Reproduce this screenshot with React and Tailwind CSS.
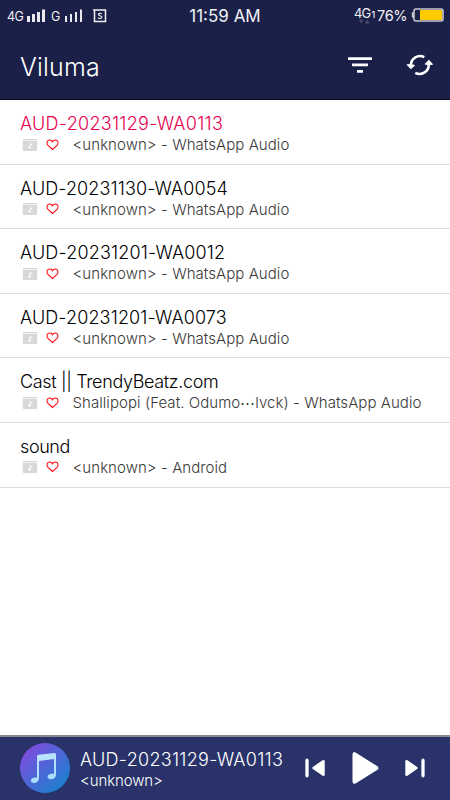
import React, { useState } from 'react';

const tracks = [
    { title: 'AUD-20231129-WA0113', info: '<unknown> - WhatsApp Audio', spacing: 'tracking-[0.29px]' },
    { title: 'AUD-20231130-WA0054', info: '<unknown> - WhatsApp Audio', spacing: 'tracking-[0.11px]' },
    { title: 'AUD-20231201-WA0012', info: '<unknown> - WhatsApp Audio', spacing: 'tracking-[0.17px]' },
    { title: 'AUD-20231201-WA0073', info: '<unknown> - WhatsApp Audio', spacing: 'tracking-[0.13px]' },
    { title: 'Cast || TrendyBeatz.com', info: 'Shallipopi (Feat. Odumo⋯lvck) - WhatsApp Audio', spacing: 'tracking-[-0.35px]' },
    { title: 'sound', info: '<unknown> - Android', spacing: 'tracking-[-0.4px]' },
];

function Signal({ wide }) {
    const w = wide ? 3 : 2;
    return (
        <svg width="18" height="14" viewBox="0 0 18 14" fill="#e8e8ee">
            <rect x="0" y="7" width={w} height="6" />
            <rect x="5" y="5" width={w} height="8" />
            <rect x="10" y="3" width={w} height="10" />
            <rect x="15" y="0.5" width={w} height="12.5" />
        </svg>
    );
}

function StatusBar() {
    return (
        <div className="grid h-8 grid-cols-3 text-[#f0f0f5]">
            <div className="flex items-start pt-[9px] pl-[7px]">
                <span className="mt-[1px] w-5 text-[12.5px] leading-[14px] tracking-[-0.5px]">4G</span>
                <Signal wide />
                <span className="mt-[1px] ml-[6px] w-[14px] text-[12.5px] leading-[14px]">G</span>
                <Signal />
                <svg className="ml-[10px]" width="14" height="14" viewBox="0 0 14 14" fill="none" stroke="currentColor">
                    <path d="M1.5 1V12.5H12.5V1H0" strokeWidth="1.5" />
                    <path d="M8.8 4.8C8 4 5.4 4 5.4 5.5S8.8 6.6 8.8 8.2S6 9.8 5.1 8.8" strokeWidth="1.2" />
                </svg>
            </div>
            <div className="pt-[6px] text-center text-[17px] leading-5">11:59 AM</div>
            <div className="flex items-start justify-end pt-[8px] pr-[6px]">
                <div className="mr-[1px] flex w-[22px] flex-col">
                    <div className="flex items-end leading-[11px]">
                        <span className="text-[13px] tracking-[-0.8px]">4G</span>
                        <span className="ml-[1px] text-[9px] leading-[9px] font-medium">1</span>
                    </div>
                    <svg className="ml-[5px]" width="11" height="5" viewBox="0 0 11 5" fill="#484c6c">
                        <path d="M0 0.5H4.5L2.2 4.5ZM6 4.5H10.5L8.2 0.5Z" />
                    </svg>
                </div>
                <span className="w-[34px] text-[14.5px] leading-4 tracking-[-0.3px]">76%</span>
                <svg width="33" height="14" viewBox="0 0 33 14">
                    <path d="M3.5 4.3H1.8Q.8 4.3.8 5.3V8.7Q.8 9.7 1.8 9.7H3.5Z" fill="#c8c8ce" />
                    <rect x="3" y="1" width="29" height="12" rx="2" fill="#1b2048" stroke="#c8c8ce" strokeWidth="1.6" />
                    <rect x="9" y="2" width="22" height="10" rx="0.7" fill="#fecb00" />
                </svg>
            </div>
        </div>
    );
}

function Header() {
    return (
        <header className="h-[100px] shrink-0 border-b border-[#080b24] bg-[#1b2048] text-white">
            <StatusBar />
            <div className="flex h-[68px] items-center justify-between pr-[16px] pl-5">
                <h1 className="pt-[2px] text-[25px] leading-8 font-light tracking-[0.2px]">Viluma</h1>
                <div className="flex items-center gap-[34px] pb-[2px]">
                    <button aria-label="Sort">
                        <svg width="24" height="18" viewBox="0 0 24 18" fill="currentColor">
                            <rect x="0" y="1.2" width="24" height="2.8" rx="0.5" />
                            <rect x="4" y="7.6" width="16" height="2.7" rx="0.5" />
                            <rect x="9" y="14" width="6" height="2.7" rx="0.5" />
                        </svg>
                    </button>
                    <button aria-label="Refresh">
                        <svg width="28" height="22" viewBox="0 0 28 22" fill="none" stroke="currentColor" strokeWidth="2.6">
                            <path d="M4.9 11A9 9 0 0 1 18.3 3.2" />
                            <path d="M22.7 11A9 9 0 0 1 9.3 18.8" />
                            <path d="M.3 10.6L4.9 9.8L9.2 11.2L4.9 15.3ZM27.3 10.6L22.7 11.6L18.4 10.2L22.9 5.7Z" fill="currentColor" stroke="none" />
                        </svg>
                    </button>
                </div>
            </div>
        </header>
    );
}

function TrackRow({ track, active, onSelect }) {
    return (
        <li
            onClick={onSelect}
            className="h-[64.6px] border-b border-[#dcdcdc] pt-[12px] pl-5"
        >
            <p className={`text-[18px] leading-[23px] font-light ${track.spacing} ${active ? 'text-[#e6004f]' : 'text-black'}`}>
                {track.title}
            </p>
            <div className="flex h-[19px] items-center">
                <svg className="ml-[2px]" width="16" height="14" viewBox="0 0 16 14">
                    <path d="M1 1H15V2.3H1Z" fill="#d4d4d4" />
                    <path d="M.8 3H15.2V12Q15.2 13 14.2 13H1.8Q.8 13 .8 12Z" fill="#d8d8d8" />
                    <path d="M8.3 5V9.4M8.3 5.2L10 7.2" stroke="#fff" strokeWidth="1" fill="none" />
                    <ellipse cx="7.4" cy="9.6" rx="1.4" ry="1.1" fill="#fff" />
                </svg>
                <svg className="ml-[8px]" width="13" height="12" viewBox="0 0 13 12" fill="none" stroke="#ff0810" strokeWidth="1.05">
                    <path d="M6.5 10.5L2 6.4C.2 4.6.8 1.3 3.4 1C5 .8 6 1.7 6.5 2.8C7 1.7 8 .8 9.6 1C12.2 1.3 12.8 4.6 11 6.4Z" />
                </svg>
                <span className="ml-[13.5px] text-[15px] leading-[19px] font-light tracking-[0.06px] whitespace-nowrap text-[#383838]">
                    {track.info}
                </span>
            </div>
        </li>
    );
}

function Player({ track }) {
    return (
        <footer className="flex h-[65px] shrink-0 items-center border-t-2 border-[#888993] bg-[#29336a] pb-[2px] pl-5 text-white">
            <svg width="50" height="50" viewBox="0 0 50 50">
                <defs>
                    <linearGradient id="disc" x1="0.1" y1="0.1" x2="0.85" y2="0.9">
                        <stop offset="0" stopColor="#7f4bdd" />
                        <stop offset="1" stopColor="#1d80d0" />
                    </linearGradient>
                    <linearGradient id="note" x1="0" y1="0" x2="0" y2="1">
                        <stop offset="0" stopColor="#b9e4ff" />
                        <stop offset="1" stopColor="#a9dcfc" />
                    </linearGradient>
                </defs>
                <circle cx="25" cy="25" r="25" fill="url(#disc)" />
                <path
                    fill="url(#note)"
                    d="M17 13.5Q17 12 18.5 11.8L34.5 10Q36 10 36 11.5V31Q36 35.8 31.5 36.2C28.5 36.4 26.8 34.5 28 32.6C29 31 31.3 30.5 34 30.8V16L19 18V34.5Q19 39.3 14.5 40C11.5 40.2 10 38.4 11.2 36.5C12.2 34.8 14.5 34.3 17 34.6Z"
                />
            </svg>
            <div className="ml-[10px] w-[215px] pt-[3px]">
                <p className="text-[18px] leading-[22px] font-light tracking-[0.29px]">{track.title}</p>
                <p className="text-[15px] leading-[19px] font-light tracking-[-0.1px]">&lt;unknown&gt;</p>
            </div>
            <div className="flex items-center text-white">
                <button aria-label="Previous" className="ml-[10px]">
                    <svg width="20" height="20" viewBox="0 0 20 20" fill="currentColor" stroke="currentColor" strokeLinejoin="round">
                        <rect x="0.8" y="1" width="2.4" height="18" rx="1" strokeWidth="0.8" />
                        <path d="M18.4 3.2V16.8L8.6 10Z" strokeWidth="2.6" />
                    </svg>
                </button>
                <button aria-label="Play" className="ml-[27px]">
                    <svg width="27" height="34" viewBox="0 0 27 34" fill="currentColor" stroke="currentColor" strokeLinejoin="round">
                        <path d="M2.5 3.2V30.8L24.4 17Z" strokeWidth="4" />
                    </svg>
                </button>
                <button aria-label="Next" className="ml-[26px]">
                    <svg width="20" height="20" viewBox="0 0 20 20" fill="currentColor" stroke="currentColor" strokeLinejoin="round">
                        <path d="M1.6 3.2V16.8L11.4 10Z" strokeWidth="2.6" />
                        <rect x="16.8" y="1" width="2.4" height="18" rx="1" strokeWidth="0.8" />
                    </svg>
                </button>
            </div>
        </footer>
    );
}

export default function App() {
    const [current, setCurrent] = useState(0);

    return (
        <div className="flex h-screen w-full flex-col overflow-hidden bg-white font-['Inter',sans-serif]">
            <Header />
            <ul className="flex-1">
                {tracks.map((track, i) => (
                    <TrackRow
                        key={track.title}
                        track={track}
                        active={i === current}
                        onSelect={() => setCurrent(i)}
                    />
                ))}
            </ul>
            <Player track={tracks[current]} />
        </div>
    );
}
